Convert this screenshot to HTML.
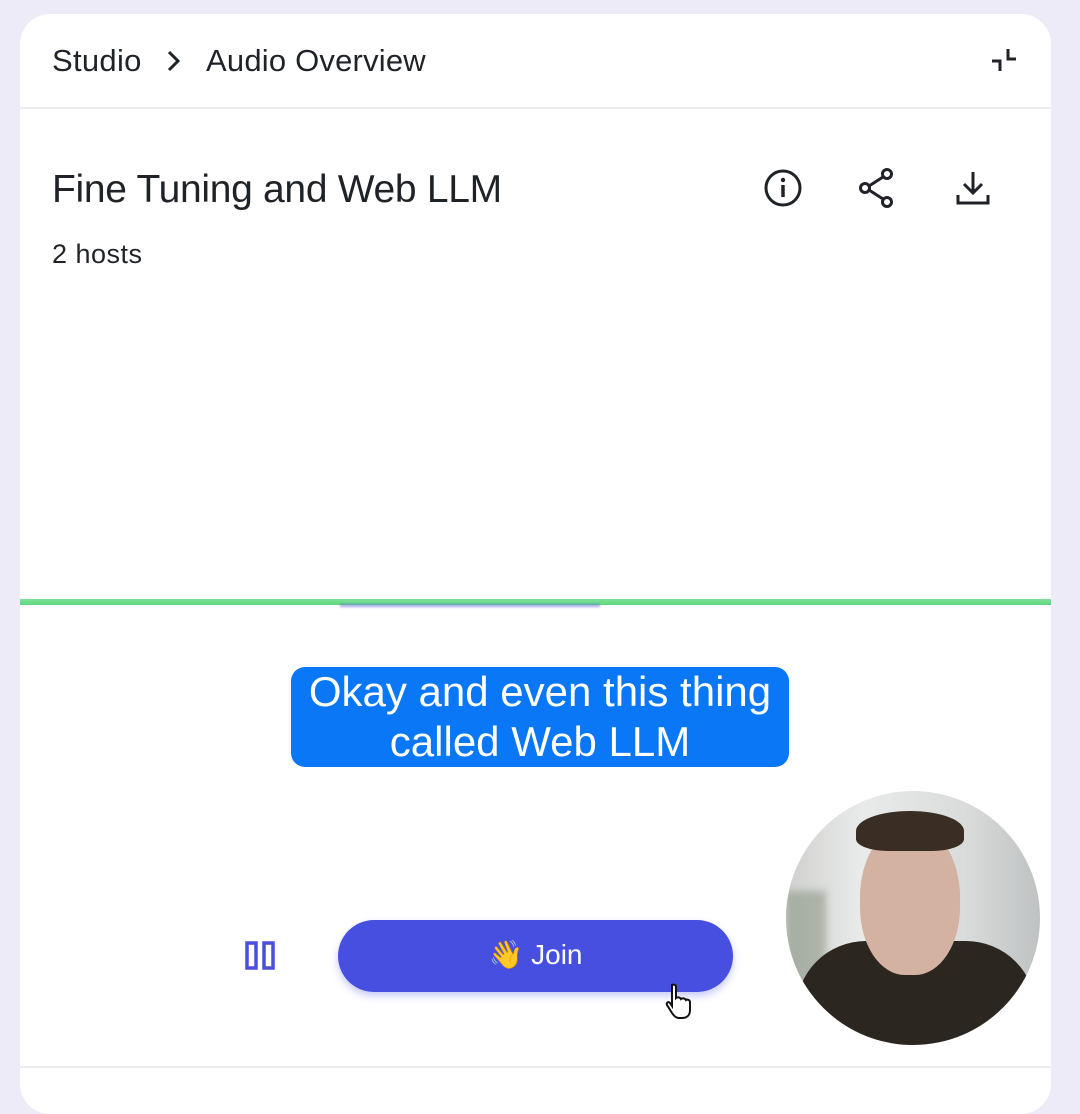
<!DOCTYPE html>
<html><head><meta charset="utf-8"><style>
*{margin:0;padding:0;box-sizing:border-box}
body{width:1080px;height:1088px;background:#ecebf7;position:relative;overflow:hidden;font-family:"Liberation Sans",sans-serif;color:#1f2328}
.card{position:absolute;left:20px;top:14px;width:1031px;height:1100px;background:#fff;border-radius:30px}
.t{position:absolute;white-space:nowrap}
</style></head><body>
<div class="card"></div>
<div class="t" style="left:52px;top:43px;font-size:31px;letter-spacing:0.3px">Studio</div>
<svg style="position:absolute;left:164px;top:49px" width="20" height="24" viewBox="0 0 20 24"><path d="M5 3l9 9-9 9" fill="none" stroke="#1f2328" stroke-width="3"/></svg>
<div class="t" style="left:206px;top:43px;font-size:31px;letter-spacing:0.2px">Audio Overview</div>
<svg style="position:absolute;left:988px;top:46px" width="32" height="30" viewBox="0 0 32 30"><path d="M4 15h8v10M28 13h-8V3" fill="none" stroke="#1f2328" stroke-width="3"/></svg>
<div style="position:absolute;left:20px;top:107px;width:1031px;height:2px;background:#ececec"></div>
<div class="t" style="left:52px;top:168px;font-size:39px;letter-spacing:-0.3px">Fine Tuning and Web LLM</div>
<div class="t" style="left:52px;top:239px;font-size:27px;letter-spacing:0.5px">2 hosts</div>
<svg style="position:absolute;left:763px;top:168px" width="40" height="40" viewBox="0 0 40 40"><circle cx="20" cy="20" r="17" fill="none" stroke="#1f2328" stroke-width="3"/><path d="M20 17v12" stroke="#1f2328" stroke-width="3.5"/><circle cx="20" cy="12" r="2.2" fill="#1f2328"/></svg>
<svg style="position:absolute;left:855px;top:166px" width="44" height="44" viewBox="0 0 44 44"><g fill="none" stroke="#1f2328" stroke-width="3"><circle cx="32" cy="8" r="4.5"/><circle cx="10" cy="22" r="4.5"/><circle cx="32" cy="36" r="4.5"/><path d="M14 20l14-9M14 24l14 9"/></g></svg>
<svg style="position:absolute;left:953px;top:168px" width="40" height="40" viewBox="0 0 40 40"><g fill="none" stroke="#1f2328" stroke-width="3"><path d="M20 4v20M11 16l9 9 9-9M5 27v8h30v-8"/></g></svg>
<div style="position:absolute;left:20px;top:599px;width:1031px;height:6px;background:linear-gradient(#7de39a,#5fd67f);"></div>
<div style="position:absolute;left:340px;top:604px;width:260px;height:3px;background:#6a70e0;opacity:.6;filter:blur(1px)"></div>
<div style="position:absolute;left:291px;top:667px;width:498px;height:100px;background:#0a77f7;border-radius:14px"></div>
<div class="t" style="left:271px;top:667px;width:538px;text-align:center;color:#fff;font-size:42px;line-height:50px;white-space:normal">Okay and even this thing<br>called Web LLM</div>
<svg style="position:absolute;left:245px;top:940px" width="32" height="32" viewBox="0 0 32 32"><g fill="none" stroke="#4a4fdc" stroke-width="3.5"><rect x="2" y="3" width="9" height="25"/><rect x="19" y="3" width="9" height="25"/></g></svg>
<div style="position:absolute;left:338px;top:920px;width:395px;height:72px;background:#464fe0;border-radius:36px;box-shadow:0 4px 8px rgba(70,79,224,.3)"></div>
<div class="t" style="left:338px;top:938px;width:395px;text-align:center;color:#fff;font-size:28px">👋 Join</div>
<svg style="position:absolute;left:664px;top:982px" width="32" height="38" viewBox="0 0 32 38"><path d="M8 3c2-1 4 0 4 2v11c1-1 4-1 5 1 1-1 4-1 5 1 1-1 4 0 4 2v8c0 5-3 8-8 8h-3c-3 0-5-2-7-5l-5-8c-1-2 1-4 3-2l2 3V5c0-1 0-2 0-2z" fill="#fff" stroke="#111" stroke-width="2"/></svg>
<div style="position:absolute;left:786px;top:791px;width:254px;height:254px;border-radius:50%;overflow:hidden;background:linear-gradient(90deg,#cfd0ce 0%,#e9ebea 30%,#dadcdc 70%,#bfc2c2 100%)">
<div style="position:absolute;left:0;top:100px;width:40px;height:140px;background:#7f8a78;opacity:.5;filter:blur(4px)"></div>
<div style="position:absolute;left:10px;top:150px;width:240px;height:150px;background:#2c2620;border-radius:70px 70px 0 0"></div>
<div style="position:absolute;left:74px;top:34px;width:100px;height:150px;background:#d4b2a2;border-radius:48% 48% 45% 45%"></div>
<div style="position:absolute;left:70px;top:20px;width:108px;height:40px;background:#3a2d24;border-radius:50% 50% 30% 30%"></div>
</div>
<div style="position:absolute;left:20px;top:1066px;width:1031px;height:2px;background:#ececec"></div>
</body></html>
